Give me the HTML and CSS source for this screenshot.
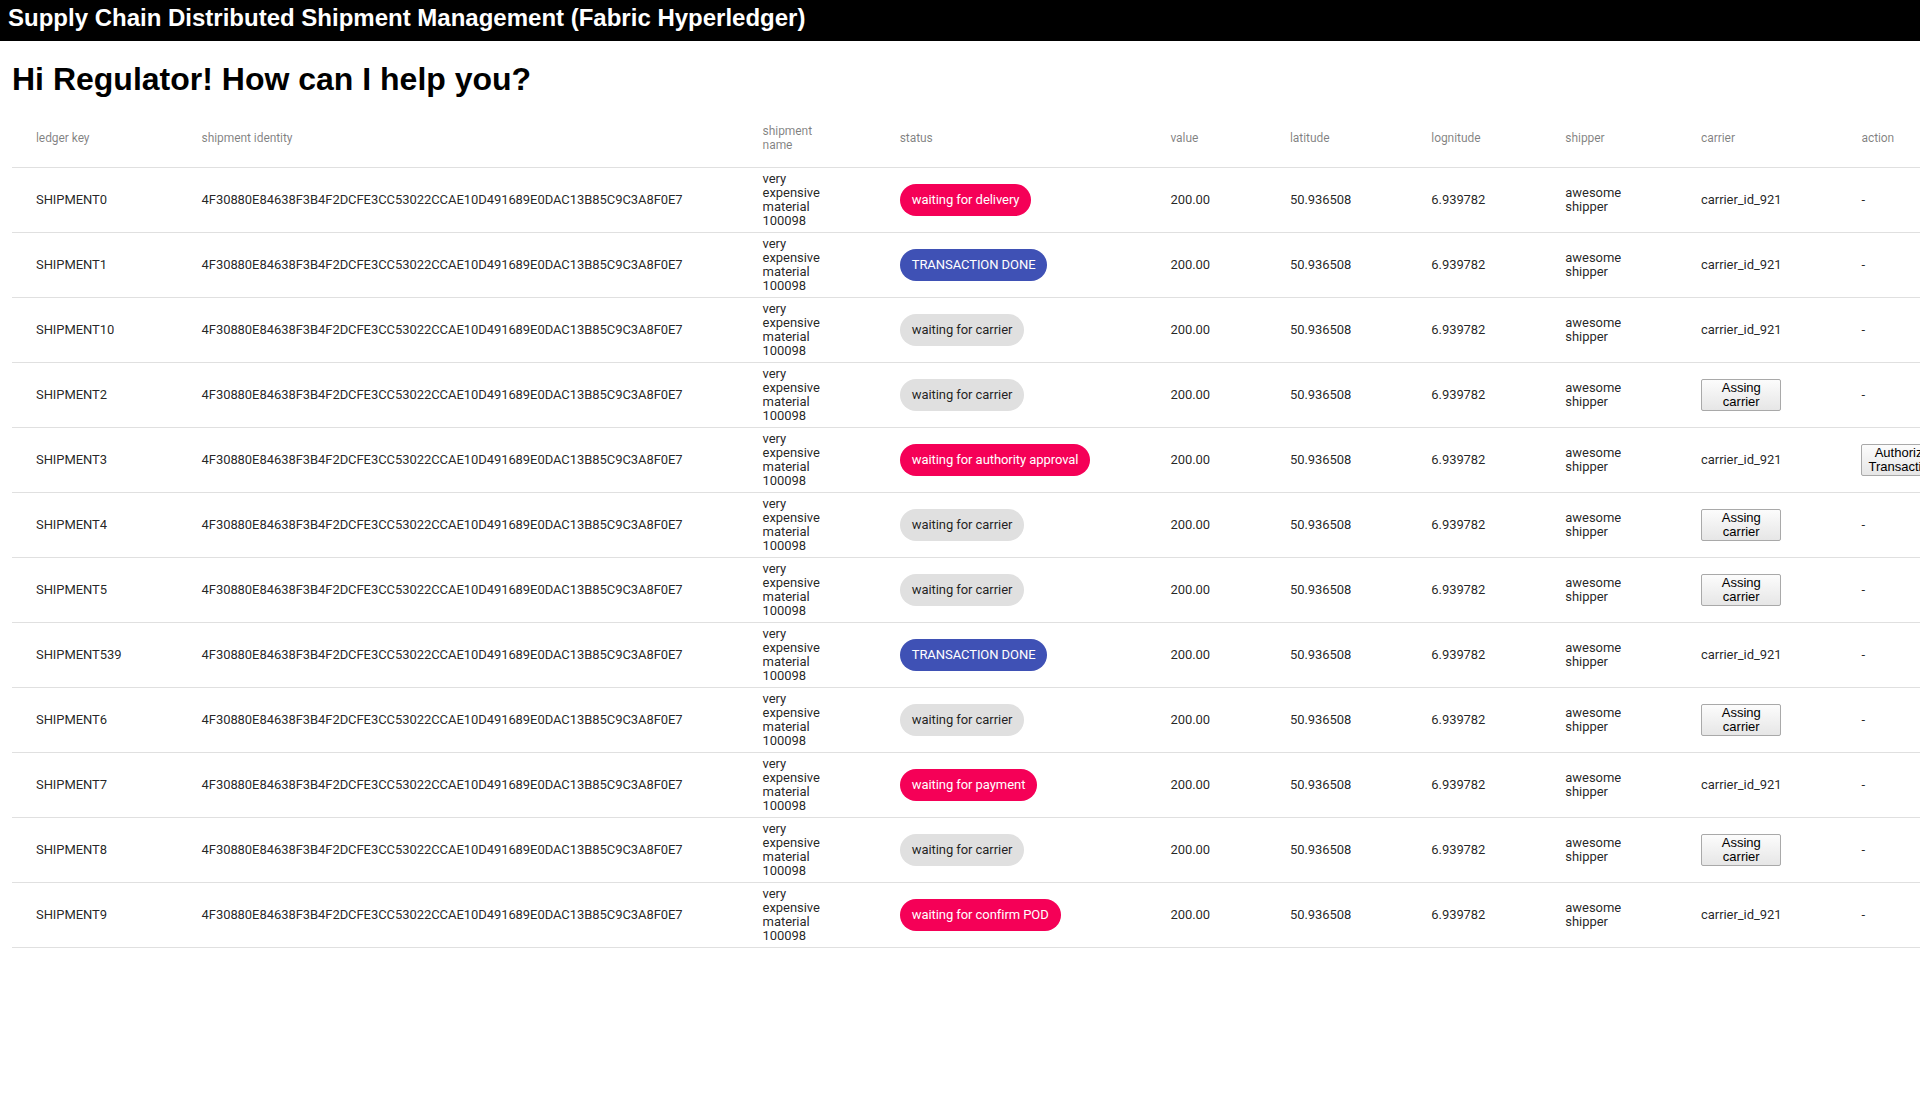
FILE: index.html
```html
<!DOCTYPE html>
<html lang="en">
<head>
<meta charset="utf-8">
<title>Supply Chain Distributed Shipment Management</title>
<link rel="stylesheet" href="styles.css">
</head>
<body>
<header class="topbar">Supply Chain Distributed Shipment Management (Fabric Hyperledger)</header>
<main class="main">
  <h1 class="greeting">Hi Regulator! How can I help you?</h1>
  <div class="table-wrap">
    <table class="ledger">
      <thead>
        <tr class="head-row">
          <th class="hcell">ledger key</th>
          <th class="hcell">shipment identity</th>
          <th class="hcell">shipment name</th>
          <th class="hcell">status</th>
          <th class="hcell">value</th>
          <th class="hcell">latitude</th>
          <th class="hcell">lognitude</th>
          <th class="hcell">shipper</th>
          <th class="hcell">carrier</th>
          <th class="hcell">action</th>
        </tr>
      </thead>
      <tbody>
        <tr class="row">
          <td class="cell nowrap">SHIPMENT0</td>
          <td class="cell nowrap">4F30880E84638F3B4F2DCFE3CC53022CCAE10D491689E0DAC13B85C9C3A8F0E7</td>
          <td class="cell">very expensive material 100098</td>
          <td class="cell nowrap"><span class="chip chip-pink">waiting for delivery</span></td>
          <td class="cell nowrap">200.00</td>
          <td class="cell nowrap">50.936508</td>
          <td class="cell nowrap">6.939782</td>
          <td class="cell">awesome shipper</td>
          <td class="cell nowrap">carrier_id_921</td>
          <td class="cell">-</td>
        </tr>
        <tr class="row">
          <td class="cell nowrap">SHIPMENT1</td>
          <td class="cell nowrap">4F30880E84638F3B4F2DCFE3CC53022CCAE10D491689E0DAC13B85C9C3A8F0E7</td>
          <td class="cell">very expensive material 100098</td>
          <td class="cell nowrap"><span class="chip chip-blue">TRANSACTION DONE</span></td>
          <td class="cell nowrap">200.00</td>
          <td class="cell nowrap">50.936508</td>
          <td class="cell nowrap">6.939782</td>
          <td class="cell">awesome shipper</td>
          <td class="cell nowrap">carrier_id_921</td>
          <td class="cell">-</td>
        </tr>
        <tr class="row">
          <td class="cell nowrap">SHIPMENT10</td>
          <td class="cell nowrap">4F30880E84638F3B4F2DCFE3CC53022CCAE10D491689E0DAC13B85C9C3A8F0E7</td>
          <td class="cell">very expensive material 100098</td>
          <td class="cell nowrap"><span class="chip chip-grey">waiting for carrier</span></td>
          <td class="cell nowrap">200.00</td>
          <td class="cell nowrap">50.936508</td>
          <td class="cell nowrap">6.939782</td>
          <td class="cell">awesome shipper</td>
          <td class="cell nowrap">carrier_id_921</td>
          <td class="cell">-</td>
        </tr>
        <tr class="row">
          <td class="cell nowrap">SHIPMENT2</td>
          <td class="cell nowrap">4F30880E84638F3B4F2DCFE3CC53022CCAE10D491689E0DAC13B85C9C3A8F0E7</td>
          <td class="cell">very expensive material 100098</td>
          <td class="cell nowrap"><span class="chip chip-grey">waiting for carrier</span></td>
          <td class="cell nowrap">200.00</td>
          <td class="cell nowrap">50.936508</td>
          <td class="cell nowrap">6.939782</td>
          <td class="cell">awesome shipper</td>
          <td class="cell"><button class="btn" type="button">Assing carrier</button></td>
          <td class="cell">-</td>
        </tr>
        <tr class="row">
          <td class="cell nowrap">SHIPMENT3</td>
          <td class="cell nowrap">4F30880E84638F3B4F2DCFE3CC53022CCAE10D491689E0DAC13B85C9C3A8F0E7</td>
          <td class="cell">very expensive material 100098</td>
          <td class="cell nowrap"><span class="chip chip-pink">waiting for authority approval</span></td>
          <td class="cell nowrap">200.00</td>
          <td class="cell nowrap">50.936508</td>
          <td class="cell nowrap">6.939782</td>
          <td class="cell">awesome shipper</td>
          <td class="cell nowrap">carrier_id_921</td>
          <td class="cell"><button class="btn" type="button">Authorize Transaction</button></td>
        </tr>
        <tr class="row">
          <td class="cell nowrap">SHIPMENT4</td>
          <td class="cell nowrap">4F30880E84638F3B4F2DCFE3CC53022CCAE10D491689E0DAC13B85C9C3A8F0E7</td>
          <td class="cell">very expensive material 100098</td>
          <td class="cell nowrap"><span class="chip chip-grey">waiting for carrier</span></td>
          <td class="cell nowrap">200.00</td>
          <td class="cell nowrap">50.936508</td>
          <td class="cell nowrap">6.939782</td>
          <td class="cell">awesome shipper</td>
          <td class="cell"><button class="btn" type="button">Assing carrier</button></td>
          <td class="cell">-</td>
        </tr>
        <tr class="row">
          <td class="cell nowrap">SHIPMENT5</td>
          <td class="cell nowrap">4F30880E84638F3B4F2DCFE3CC53022CCAE10D491689E0DAC13B85C9C3A8F0E7</td>
          <td class="cell">very expensive material 100098</td>
          <td class="cell nowrap"><span class="chip chip-grey">waiting for carrier</span></td>
          <td class="cell nowrap">200.00</td>
          <td class="cell nowrap">50.936508</td>
          <td class="cell nowrap">6.939782</td>
          <td class="cell">awesome shipper</td>
          <td class="cell"><button class="btn" type="button">Assing carrier</button></td>
          <td class="cell">-</td>
        </tr>
        <tr class="row">
          <td class="cell nowrap">SHIPMENT539</td>
          <td class="cell nowrap">4F30880E84638F3B4F2DCFE3CC53022CCAE10D491689E0DAC13B85C9C3A8F0E7</td>
          <td class="cell">very expensive material 100098</td>
          <td class="cell nowrap"><span class="chip chip-blue">TRANSACTION DONE</span></td>
          <td class="cell nowrap">200.00</td>
          <td class="cell nowrap">50.936508</td>
          <td class="cell nowrap">6.939782</td>
          <td class="cell">awesome shipper</td>
          <td class="cell nowrap">carrier_id_921</td>
          <td class="cell">-</td>
        </tr>
        <tr class="row">
          <td class="cell nowrap">SHIPMENT6</td>
          <td class="cell nowrap">4F30880E84638F3B4F2DCFE3CC53022CCAE10D491689E0DAC13B85C9C3A8F0E7</td>
          <td class="cell">very expensive material 100098</td>
          <td class="cell nowrap"><span class="chip chip-grey">waiting for carrier</span></td>
          <td class="cell nowrap">200.00</td>
          <td class="cell nowrap">50.936508</td>
          <td class="cell nowrap">6.939782</td>
          <td class="cell">awesome shipper</td>
          <td class="cell"><button class="btn" type="button">Assing carrier</button></td>
          <td class="cell">-</td>
        </tr>
        <tr class="row">
          <td class="cell nowrap">SHIPMENT7</td>
          <td class="cell nowrap">4F30880E84638F3B4F2DCFE3CC53022CCAE10D491689E0DAC13B85C9C3A8F0E7</td>
          <td class="cell">very expensive material 100098</td>
          <td class="cell nowrap"><span class="chip chip-pink">waiting for payment</span></td>
          <td class="cell nowrap">200.00</td>
          <td class="cell nowrap">50.936508</td>
          <td class="cell nowrap">6.939782</td>
          <td class="cell">awesome shipper</td>
          <td class="cell nowrap">carrier_id_921</td>
          <td class="cell">-</td>
        </tr>
        <tr class="row">
          <td class="cell nowrap">SHIPMENT8</td>
          <td class="cell nowrap">4F30880E84638F3B4F2DCFE3CC53022CCAE10D491689E0DAC13B85C9C3A8F0E7</td>
          <td class="cell">very expensive material 100098</td>
          <td class="cell nowrap"><span class="chip chip-grey">waiting for carrier</span></td>
          <td class="cell nowrap">200.00</td>
          <td class="cell nowrap">50.936508</td>
          <td class="cell nowrap">6.939782</td>
          <td class="cell">awesome shipper</td>
          <td class="cell"><button class="btn" type="button">Assing carrier</button></td>
          <td class="cell">-</td>
        </tr>
        <tr class="row">
          <td class="cell nowrap">SHIPMENT9</td>
          <td class="cell nowrap">4F30880E84638F3B4F2DCFE3CC53022CCAE10D491689E0DAC13B85C9C3A8F0E7</td>
          <td class="cell">very expensive material 100098</td>
          <td class="cell nowrap"><span class="chip chip-pink">waiting for confirm POD</span></td>
          <td class="cell nowrap">200.00</td>
          <td class="cell nowrap">50.936508</td>
          <td class="cell nowrap">6.939782</td>
          <td class="cell">awesome shipper</td>
          <td class="cell nowrap">carrier_id_921</td>
          <td class="cell">-</td>
        </tr>
      </tbody>
    </table>
  </div>
</main>
</body>
</html>
```
FILE: styles.css
```css
html, body {
  margin: 0;
  padding: 0;
  background: #ffffff;
  overflow: hidden;
}

body {
  font-family: "Liberation Sans", Arial, sans-serif;
  color: #000;
}

.topbar {
  height: 41px;
  line-height: 35px;
  padding-left: 8px;
  background: #000;
  color: #fff;
  font-size: 24px;
  font-weight: 700;
  white-space: nowrap;
}

.main {
  padding: 0;
}

.greeting {
  margin: 20px 0 13px;
  padding-left: 12px;
  font-size: 32px;
  font-weight: 700;
  line-height: 37px;
}

.table-wrap {
  padding-left: 12px;
  overflow: hidden;
}

.ledger {
  width: 100%;
  border-collapse: collapse;
  border-spacing: 0;
  font-family: Roboto, "Noto Sans", sans-serif;
  letter-spacing: -0.065px;
}

.head-row {
  height: 56px;
}

.hcell {
  padding: 4px 56px 4px 24px;
  text-align: left;
  vertical-align: middle;
  font-size: 12px;
  font-weight: 400;
  line-height: 1.12;
  color: rgba(0, 0, 0, 0.5);
  border-bottom: 1px solid #e0e0e0;
}

.row {
  height: 65px;
}

.cell {
  padding: 4px 56px 4px 24px;
  text-align: left;
  vertical-align: middle;
  font-size: 13px;
  line-height: 14px;
  color: rgba(0, 0, 0, 0.87);
  border-bottom: 1px solid #e0e0e0;
}

.nowrap {
  white-space: nowrap;
}

.chip {
  display: inline-flex;
  align-items: center;
  height: 32px;
  padding: 0 12px;
  border-radius: 16px;
  font-size: 13px;
  white-space: nowrap;
  vertical-align: middle;
}

.chip-pink {
  background: #f50057;
  color: #fff;
}

.chip-blue {
  background: #3f51b5;
  color: #fff;
}

.chip-grey {
  background: #e0e0e0;
  color: rgba(0, 0, 0, 0.87);
}

.btn {
  font-family: "Liberation Sans", Arial, sans-serif;
  font-size: 13px;
  line-height: 14px;
  letter-spacing: 0;
  padding: 1px 6px;
  color: #000;
  background: linear-gradient(#fcfcfc, #e6e6e6);
  border: 1px solid #a9a9a9;
  border-radius: 2px;
  text-align: center;
}
```
